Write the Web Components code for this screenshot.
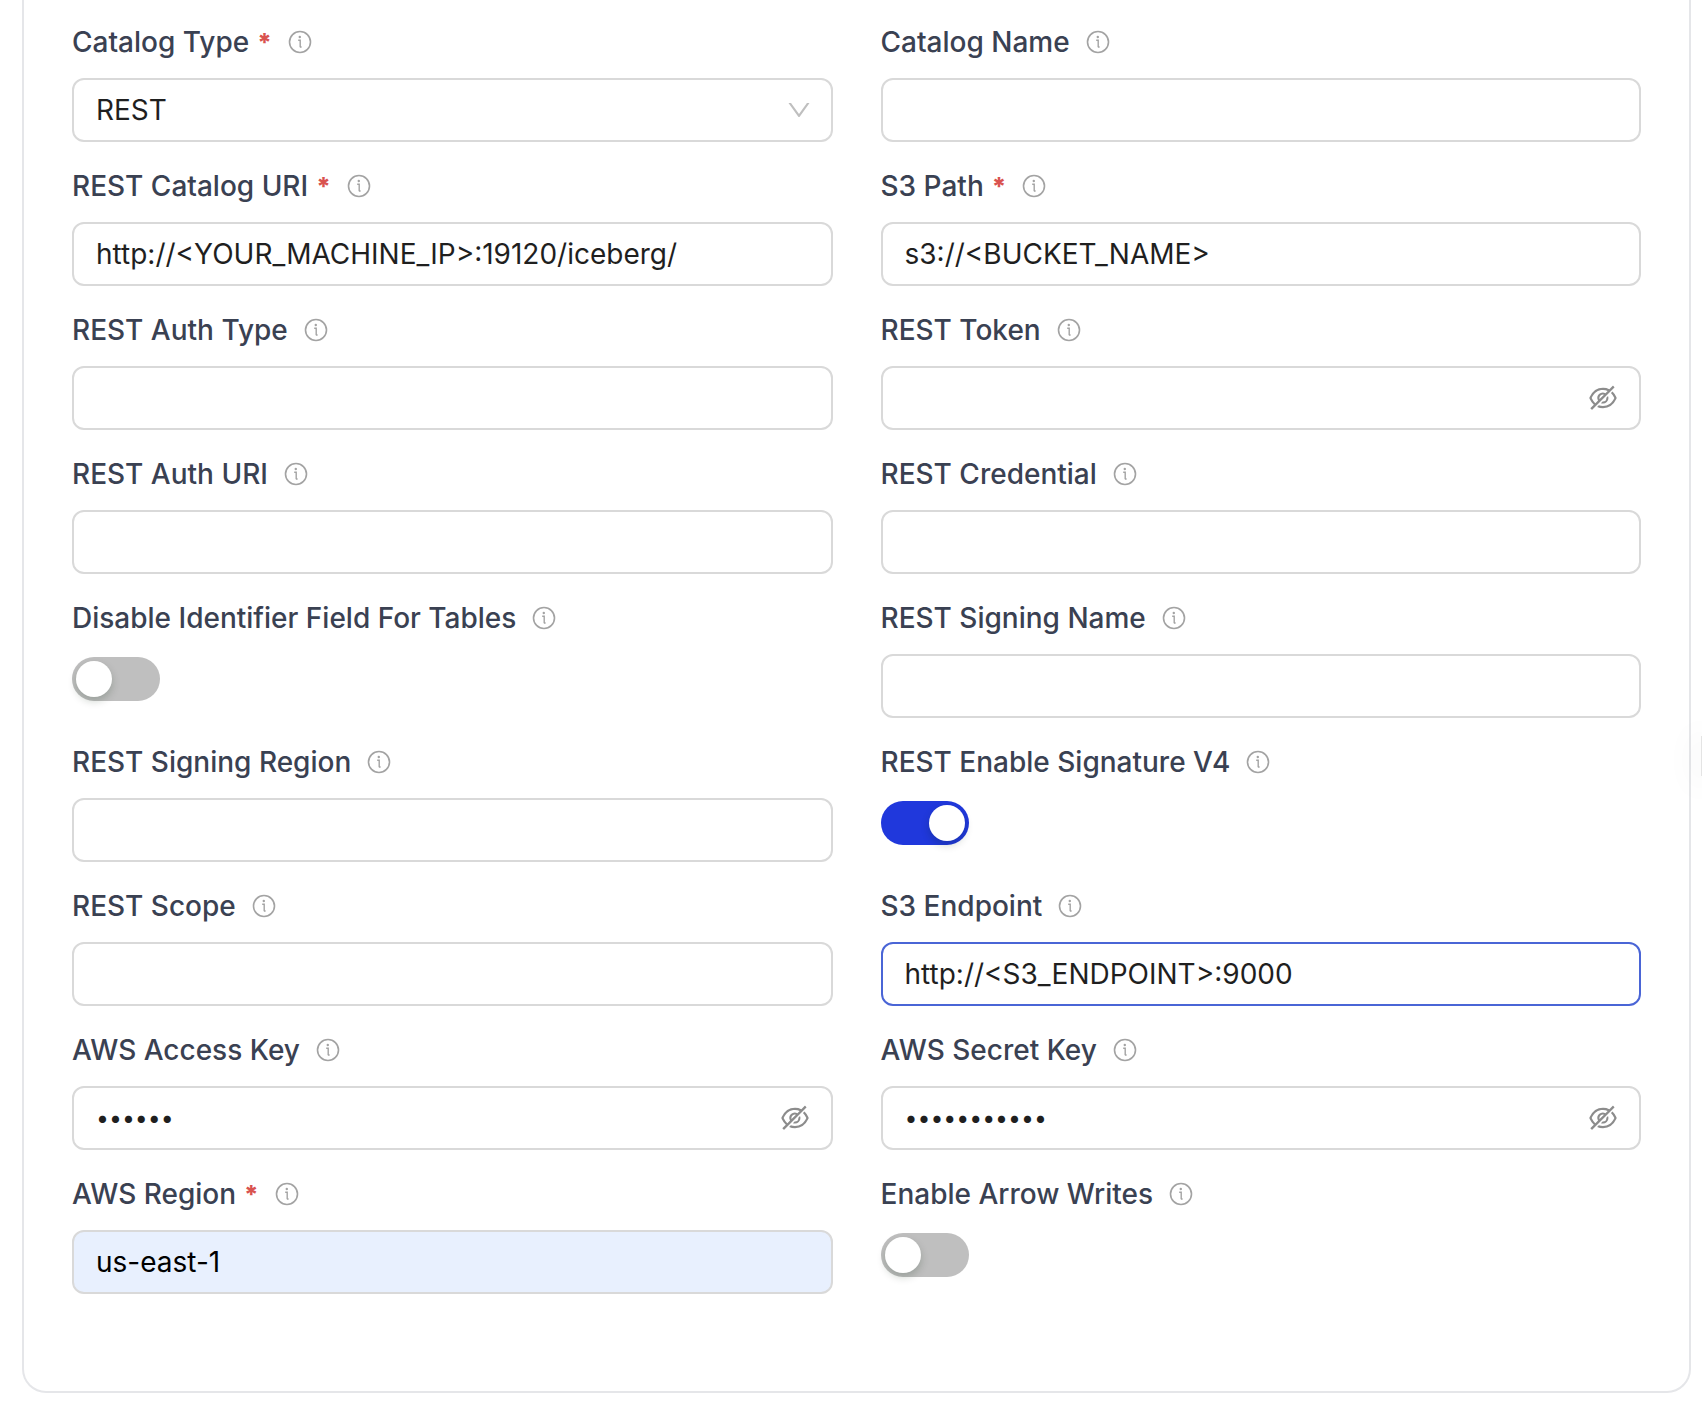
<!DOCTYPE html>
<html lang="en">
<head>
<meta charset="utf-8">
<meta name="viewport" content="width=device-width, initial-scale=1">
<title>Catalog configuration</title>
<style>
  body {
    margin: 0;
    background: #fff;
    font-family: Inter, "Liberation Sans", sans-serif;
    font-size: 28px;
    --label: #3a4152;
    --text: #1f1f1f;
    --border: #d9d9d9;
    --accent: #2038dc;
  }
</style>
</head>
<body>
<config-card>
  <form-field label="Catalog Type" required><select-box value="REST"></select-box></form-field>
  <form-field label="Catalog Name"><text-box></text-box></form-field>
  <form-field label="REST Catalog URI" required><text-box value="http://&lt;YOUR_MACHINE_IP&gt;:19120/iceberg/"></text-box></form-field>
  <form-field label="S3 Path" required><text-box value="s3://&lt;BUCKET_NAME&gt;"></text-box></form-field>
  <form-field label="REST Auth Type"><text-box></text-box></form-field>
  <form-field label="REST Token"><text-box secret></text-box></form-field>
  <form-field label="REST Auth URI"><text-box></text-box></form-field>
  <form-field label="REST Credential"><text-box></text-box></form-field>
  <form-field label="Disable Identifier Field For Tables"><toggle-switch></toggle-switch></form-field>
  <form-field label="REST Signing Name"><text-box></text-box></form-field>
  <form-field label="REST Signing Region"><text-box></text-box></form-field>
  <form-field label="REST Enable Signature V4"><toggle-switch checked></toggle-switch></form-field>
  <form-field label="REST Scope"><text-box></text-box></form-field>
  <form-field label="S3 Endpoint"><text-box active value="http://&lt;S3_ENDPOINT&gt;:9000"></text-box></form-field>
  <form-field label="AWS Access Key"><text-box secret value="access"></text-box></form-field>
  <form-field label="AWS Secret Key"><text-box secret value="secretvalue"></text-box></form-field>
  <form-field label="AWS Region" required><text-box filled value="us-east-1"></text-box></form-field>
  <form-field label="Enable Arrow Writes"><toggle-switch></toggle-switch></form-field>
</config-card>
<side-handle></side-handle>

<script>
const render = (el, html) => { el.attachShadow({ mode: 'open' }).innerHTML = html; };

customElements.define('config-card', class extends HTMLElement {
  connectedCallback() {
    render(this, `
      <style>
        :host { display: block; padding: 0 11px 15px 22px; }
        form {
          display: grid;
          grid-template-columns: minmax(0, 1fr) minmax(0, 1fr);
          column-gap: 48px;
          row-gap: 22px;
          padding: 20px 48px 97px;
          border: 2px solid #e5e6e9;
          border-top: 0;
          border-radius: 0 0 24px 24px;
        }
      </style>
      <form><slot></slot></form>`);
  }
});

customElements.define('info-icon', class extends HTMLElement {
  connectedCallback() {
    render(this, `
      <style>
        :host { display: block; width: 24px; height: 24px; color: #a3a3a3; }
        svg { display: block; width: 100%; height: 100%; }
      </style>
      <svg viewBox="0 0 24 24" fill="none" stroke="currentColor" aria-hidden="true">
        <circle cx="12" cy="12" r="10.5" stroke-width="1.6"/>
        <path d="M10.2 10.2h2v7M12 17h1.6" stroke-width="1.4"/>
        <circle cx="11.8" cy="7" r="1.2" fill="currentColor" stroke="none"/>
      </svg>`);
  }
});

/* Stacks a label row over a control; clicking the label focuses the control. */
customElements.define('form-field', class extends HTMLElement {
  connectedCallback() {
    const text = this.getAttribute('label');
    render(this, `
      <style>
        :host { display: block; }
        label {
          display: flex;
          align-items: center;
          height: 44px;
          margin-bottom: 14px;
          color: var(--label);
          font-weight: 500;
          line-height: 44px;
          white-space: nowrap;
        }
        .mark { margin-left: 8px; color: #d9534f; font-size: 25px; font-weight: 800; }
        info-icon { margin-left: 16px; }
      </style>
      <label>${text}${this.hasAttribute('required') ? '<span class="mark">*</span>' : ''}<info-icon></info-icon></label>
      <slot></slot>`);
    this.shadowRoot.querySelector('label').addEventListener('click', () => {
      this.firstElementChild.shadowRoot.querySelector('input, select').focus();
    });
  }
});

const boxStyle = `
  :host { display: block; position: relative; height: 64px; }
  input, select {
    display: block;
    box-sizing: border-box;
    width: 100%;
    height: 64px;
    margin: 0;
    padding: 0 22px;
    border: 2px solid var(--border);
    border-radius: 12px;
    outline: none;
    background: #fff;
    color: var(--text);
    font: inherit;
    appearance: none;
  }
  input:focus, select:focus { border-color: #4a65d6; }
  svg { display: block; width: 100%; height: 100%; fill: currentColor; }
`;

const eyeOff = `<svg viewBox="0 0 1024 1024" aria-hidden="true">
  <path d="M942.2 486.2Q889.47 375.11 816.7 305l-50.88 50.88C807.31 395.53 843.45 447.4 874.7 512 791.5 684.2 673.4 766 512 766q-72.67 0-133.87-22.38L323 798.75Q408 838 512 838q288.3 0 430.2-300.3a60.29 60.29 0 000-51.5zm-63.57-320.64L836 122.88a8 8 0 00-11.32 0L715.31 232.2Q624.86 186 512 186q-288.3 0-430.2 300.3a60.3 60.3 0 000 51.5q56.69 119.4 136.5 191.41L112.48 835a8 8 0 000 11.31L155.17 889a8 8 0 0011.31 0l712.15-712.12a8 8 0 000-11.32zM149.3 512C232.6 339.8 350.7 258 512 258c54.54 0 104.13 9.36 149.12 28.39l-70.3 70.3a176 176 0 00-238.13 238.13l-83.42 83.42C223.1 637.49 183.3 582.28 149.3 512zm246.7 0a112.11 112.11 0 01146.2-106.69L401.31 546.2A112 112 0 01396 512z"/>
  <path d="M508 624c-3.46 0-6.87-.16-10.25-.47l-52.82 52.82a176.09 176.09 0 00227.42-227.42l-52.82 52.82c.31 3.38.47 6.79.47 10.25a111.94 111.94 0 01-112 112z"/>
</svg>`;

customElements.define('text-box', class extends HTMLElement {
  connectedCallback() {
    const secret = this.hasAttribute('secret');
    render(this, `
      <style>${boxStyle}
        :host([active]) input { border-color: #4a65d6; }
        :host([filled]) input { background: #e8f0fe; color: #000; }
        :host([secret]) input { padding-right: 64px; }
        input[type="password"] { font-size: 23px; }
        button {
          position: absolute;
          top: 16px;
          right: 22px;
          width: 32px;
          height: 32px;
          padding: 0;
          border: 0;
          background: none;
          color: #8c8c8c;
          cursor: pointer;
        }
      </style>
      <input type="${secret ? 'password' : 'text'}" autocomplete="off">
      ${secret ? `<button type="button" aria-label="Show value">${eyeOff}</button>` : ''}`);
    const input = this.shadowRoot.querySelector('input');
    input.value = this.getAttribute('value') || '';
    input.setAttribute('aria-label', this.parentElement.getAttribute('label'));
    if (secret) {
      this.shadowRoot.querySelector('button').addEventListener('click', () => {
        input.type = input.type === 'password' ? 'text' : 'password';
      });
    }
  }
});

customElements.define('select-box', class extends HTMLElement {
  connectedCallback() {
    render(this, `
      <style>${boxStyle}
        .arrow {
          position: absolute;
          top: 18px;
          right: 20px;
          width: 28px;
          height: 28px;
          color: #bfbfbf;
          pointer-events: none;
        }
      </style>
      <select><option>${this.getAttribute('value')}</option></select>
      <span class="arrow"><svg viewBox="0 0 1024 1024" aria-hidden="true"><path d="M884 256h-75c-5.1 0-9.9 2.5-12.9 6.6L512 654.2 227.9 262.6c-3-4.1-7.8-6.6-12.9-6.6h-75c-6.5 0-10.3 7.4-6.5 12.7l352.6 486.1c12.8 17.6 39 17.6 51.7 0l352.6-486.1c3.9-5.3.1-12.7-6.4-12.7z"/></svg></span>`);
    this.shadowRoot.querySelector('select').setAttribute('aria-label', this.parentElement.getAttribute('label'));
  }
});

customElements.define('toggle-switch', class extends HTMLElement {
  connectedCallback() {
    render(this, `
      <style>
        :host { display: block; padding: 3px 0; }
        input {
          display: flex;
          align-items: center;
          box-sizing: border-box;
          width: 88px;
          height: 44px;
          margin: 0;
          padding: 4px;
          border-radius: 22px;
          background: #bfbfbf;
          appearance: none;
          cursor: pointer;
        }
        input::before {
          content: "";
          width: 36px;
          height: 36px;
          border-radius: 50%;
          background: #fff;
          box-shadow: 0 4px 8px rgba(0, 35, 11, .2);
        }
        input:checked { justify-content: flex-end; background: var(--accent); }
      </style>
      <input type="checkbox" role="switch"${this.hasAttribute('checked') ? ' checked' : ''}>`);
    this.shadowRoot.querySelector('input').setAttribute('aria-label', this.parentElement.getAttribute('label'));
  }
});

/* Thin handle docked to the right edge of the window. */
customElements.define('side-handle', class extends HTMLElement {
  connectedCallback() {
    render(this, `
      <style>
        :host {
          position: fixed;
          top: 736px;
          right: 0;
          width: 1px;
          height: 40px;
          background: #e4e4e4;
          box-shadow: 0 4px 32px 8px rgba(0, 0, 0, .04);
        }
      </style>`);
  }
});
</script>
</body>
</html>
